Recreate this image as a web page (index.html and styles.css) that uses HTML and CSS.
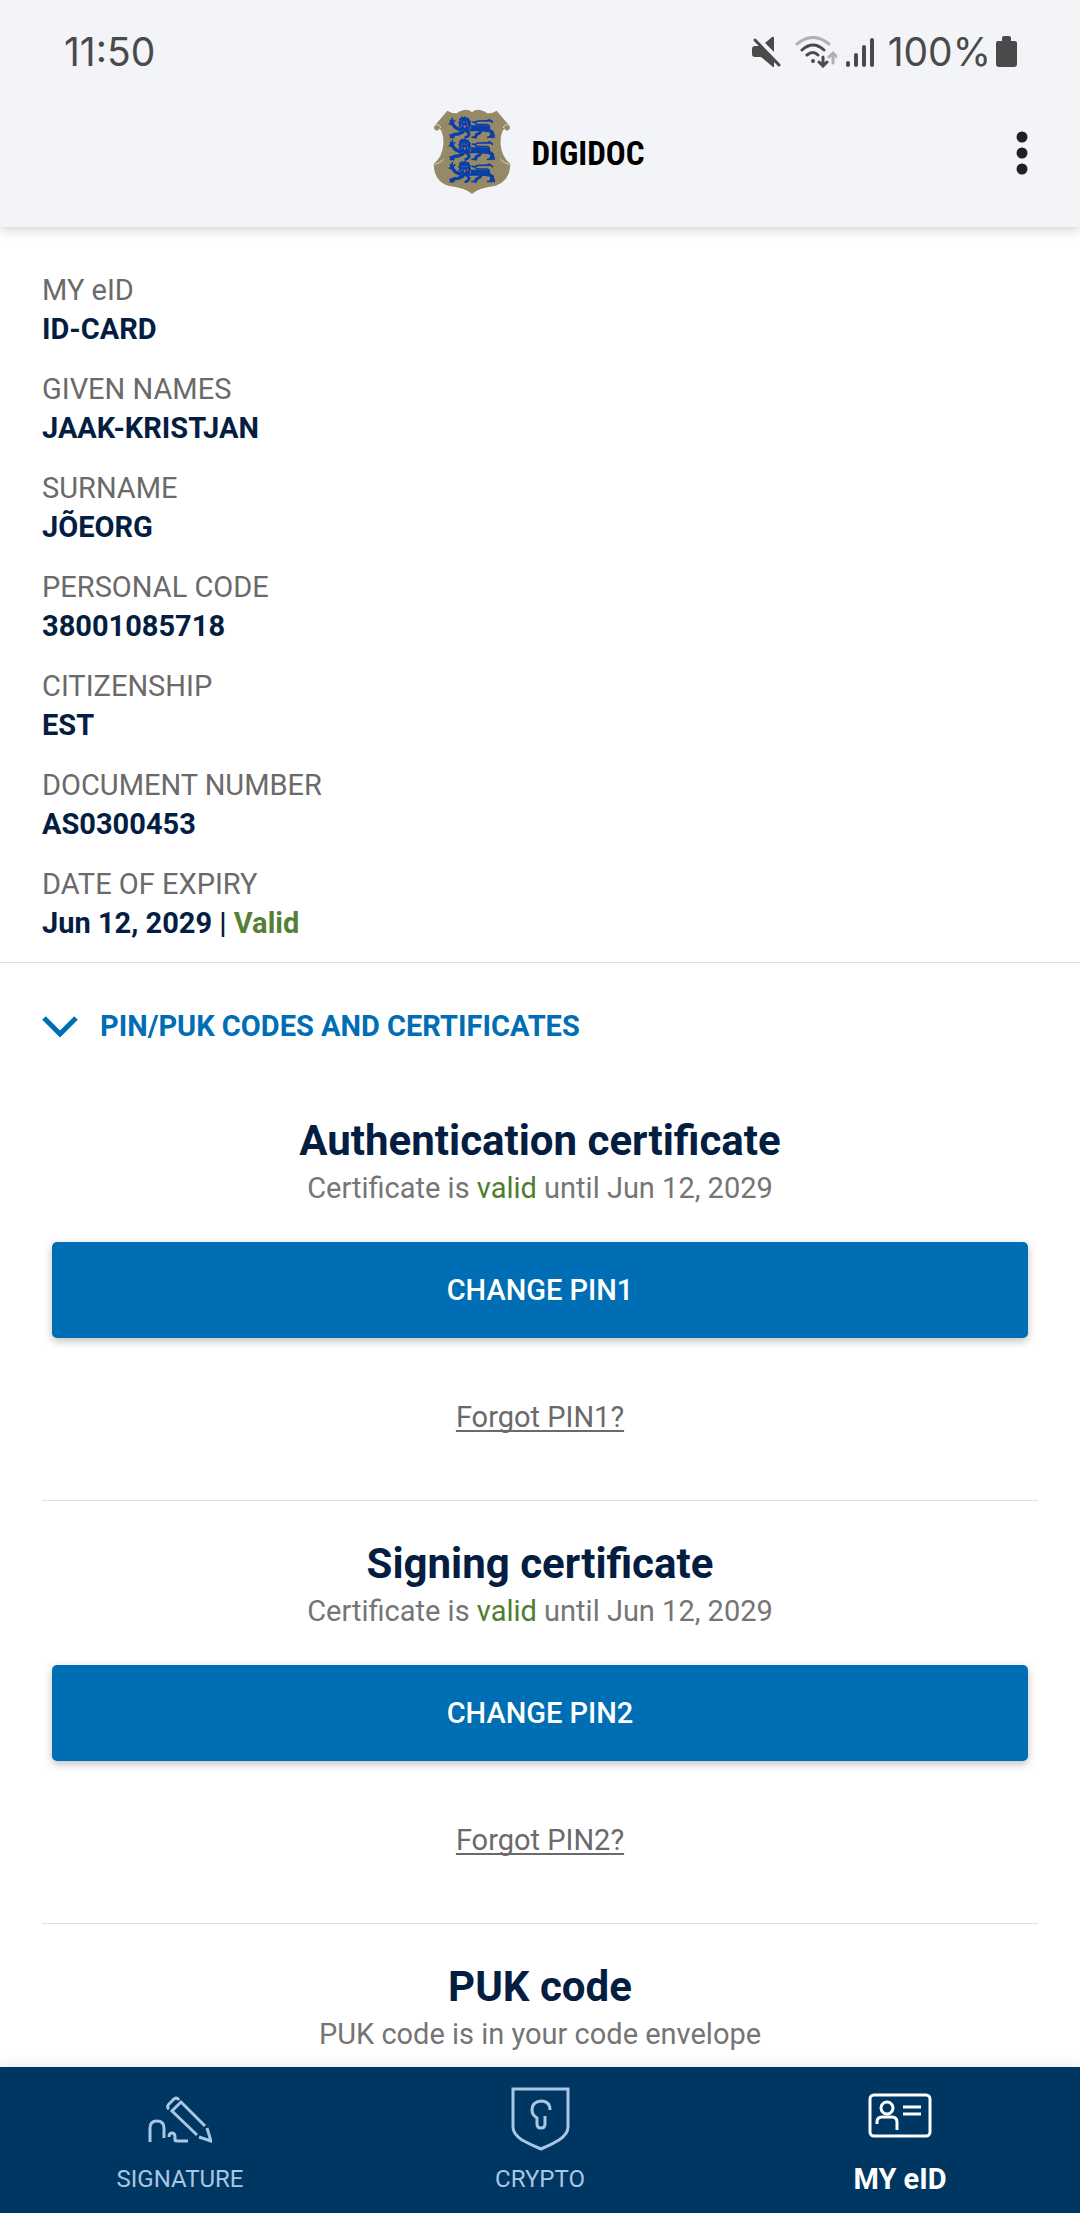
FILE: index.html
```html
<!DOCTYPE html>
<html lang="en">
<head>
  <meta charset="UTF-8">
  <meta name="viewport" content="width=device-width, initial-scale=1.0">
  <title>DigiDoc</title>
  <link rel="stylesheet" href="styles.css">
</head>
<body>

  <header>
    <div class="status-bar">
      <span>11:50</span>
      <div class="status-icons">
        <!-- Muted -->
        <svg width="30" height="32" viewBox="0 0 30 32" fill="#4a4a4a">
          <path d="M0 13q0-3 3-3h6l13 12v9h-1L9 21H3q-3 0-3-3zM13 7l7-6q2-1 2 1v14z"/>
          <path d="M5 1l24 25" stroke="#f3f4f7" stroke-width="3"/>
          <path d="M3 4l24 25" stroke="#4a4a4a" stroke-width="3" stroke-linecap="round"/>
        </svg>
        <!-- Wifi -->
        <svg class="wifi" width="42" height="32" viewBox="0 0 42 32" fill="none" stroke="#4a4a4a" stroke-width="3" stroke-linecap="round">
          <path d="M2 8q16-13 32 0" stroke="#b0b1b3"/>
          <path d="M7 14q11-10 22 0M12 19q6-5 11 0M28 21v8M24 26l4 4 4-4"/>
          <path d="M38 27v-9M34 21l4-4 4 4" stroke="#b0b1b3"/>
          <circle cx="18" cy="25" r="2" fill="#4a4a4a" stroke="none"/>
        </svg>
        <!-- Signal -->
        <svg class="signal" width="30" height="32" viewBox="0 0 30 32" stroke="#4a4a4a" stroke-width="4" stroke-linecap="round">
          <path d="M4 27v2M12 19v10M20 11v18M28 4v25"/>
        </svg>
        <span>100%</span>
        <svg class="battery" width="21" height="31" viewBox="0 0 21 31" fill="#4a4a4a">
          <path d="M6 5V2q0-2 2-2h5q2 0 2 2v3h4q2 0 2 2v21q0 3-3 3H3q-3 0-3-3V7q0-2 2-2z"/>
        </svg>
      </div>
    </div>

    <div class="title-bar">
      <div class="brand">
        <svg width="82" height="90" viewBox="0 0 246 270">
          <defs>
            <g id="lion">
              <g fill="none" stroke="#0a3ea8" stroke-linecap="round" stroke-linejoin="round">
                <!-- raised and lower front legs -->
                <path d="M88 66L72 58 62 44" stroke-width="10"/>
                <path d="M62 44l-4-7M63 44l1-13M64 44l7-6M59 48l-4-1" stroke-width="5"/>
                <path d="M96 72L82 78 70 79 62 86" stroke-width="10"/>
                <path d="M66 80l-9 1M64 84l-6 4M68 84v5" stroke-width="5"/>
                <!-- body and hind legs -->
                <path d="M104 62l20-1 30 0 14 2" stroke-width="18"/>
                <path d="M162 64l13 3 9 7-3 11" stroke-width="11"/>
                <path d="M180 86l-10 2M184 84l6 4M184 78l6 4" stroke-width="5"/>
                <path d="M152 66l-6 9-10 5-2 6" stroke-width="9"/>
                <path d="M134 86l-11 2M136 86l-3 4" stroke-width="5"/>
                <path d="M108 70l7 8-4 7-7 3" stroke-width="8"/>
                <!-- tail -->
                <path d="M174 62q4-9-6-12l-20 0q-14 0-15-5t10-6l32-1q8 0 9 5M133 44l-9-2M166 39l10-4" stroke-width="5"/>
              </g>
              <!-- mane and face -->
              <path d="M84 32l5-2 3-5 5 3 6-4 3 5 8 0 1 6 5 5-2 6 3 6-5 5-1 7-7 2-5 5-6-4-8-1-1-7-6-4 3-6-4-5 4-5z" fill="#0a3ea8"/>
              <path d="M90 41l5 3M104 44l5-3M93 49l-3 8M109 49l1 8M99 39v5M119 54l-2 12" stroke="#968a66" stroke-width="2" fill="none"/>
              <path d="M98 52h6v6q-3 4-6 0z" fill="#d4526a"/>
            </g>
          </defs>
          <path d="M123 12Q135 3 147 6q14 2 22 10 14 1 28-8l32 38q8 6 8 12 0 11-12 9-5-1-4-7-14 17-12 50 3 36 29 58-1 52-44 65-55 7-71 25-16-18-71-25-43-13-44-65 26-22 29-58 2-33-12-50 1 6-4 7-12 2-12-9 0-6 8-12L49 8q14 9 28 8 8-8 22-10 12-3 24 6z" fill="#968a66"/>
          <path d="M12 52q14-6 17 8M234 52q-14-6-17 8M38 154q-12 12-28 16M208 154q12 12 28 16" fill="none" stroke="#f3f4f7" stroke-width="2"/>
          <use href="#lion"/>
          <use href="#lion" y="66"/>
          <use href="#lion" y="133"/>
        </svg>
        <h1>DIGIDOC</h1>
      </div>
      <button class="menu-btn" aria-label="Menu">
        <svg width="12" height="44" viewBox="0 0 12 44" fill="#212121">
          <circle cx="6" cy="6" r="5.5"/>
          <circle cx="6" cy="22" r="5.5"/>
          <circle cx="6" cy="38" r="5.5"/>
        </svg>
      </button>
    </div>
  </header>

  <main>
    <dl class="person">
      <div><dt>MY eID</dt><dd>ID-CARD</dd></div>
      <div><dt>GIVEN NAMES</dt><dd>JAAK-KRISTJAN</dd></div>
      <div><dt>SURNAME</dt><dd>JÕEORG</dd></div>
      <div><dt>PERSONAL CODE</dt><dd>38001085718</dd></div>
      <div><dt>CITIZENSHIP</dt><dd>EST</dd></div>
      <div><dt>DOCUMENT NUMBER</dt><dd>AS0300453</dd></div>
      <div><dt>DATE OF EXPIRY</dt><dd>Jun 12, 2029 | <span class="valid">Valid</span></dd></div>
    </dl>

    <button class="codes-toggle" aria-expanded="true">
      <svg width="36" height="22" viewBox="0 0 36 22" fill="none" stroke="#006eb5" stroke-width="5">
        <path d="M2 2l16 16L34 2"/>
      </svg>
      PIN/PUK CODES AND CERTIFICATES
    </button>

    <section class="certificate">
      <h2>Authentication certificate</h2>
      <p>Certificate is <span class="valid">valid</span> until Jun 12, 2029</p>
      <button class="change-btn">CHANGE PIN1</button>
      <a href="#">Forgot PIN1?</a>
    </section>

    <section class="certificate">
      <h2>Signing certificate</h2>
      <p>Certificate is <span class="valid">valid</span> until Jun 12, 2029</p>
      <button class="change-btn">CHANGE PIN2</button>
      <a href="#">Forgot PIN2?</a>
    </section>

    <section class="certificate">
      <h2>PUK code</h2>
      <p>PUK code is in your code envelope</p>
    </section>
  </main>

  <nav>
    <a href="#">
      <svg width="64" height="64" viewBox="0 0 64 64" fill="none" stroke="#a9c6e3" stroke-width="3">
        <path d="M2 55V41q0-7 7-7t7 7v10M21 50q0-4 3-4t3 4v3q0 1 2 1h11"/>
        <path d="M31 13q-2-3-5-1l-5 5q-3 3 0 5M57 39L33 15l-9 9 25 24M51 50l12 4-4-13"/>
      </svg>
      SIGNATURE
    </a>
    <a href="#">
      <svg width="64" height="64" viewBox="0 0 64 64" fill="none" stroke="#a9c6e3" stroke-width="3">
        <path d="M5 2h55v38q0 7-9 13-8 5-18 9-10-4-19-9-9-6-9-13z"/>
        <path d="M42 23q0-9-9-9-9 1-9 9 0 5 5 8v6q0 4 4 4t4-4v-8"/>
      </svg>
      CRYPTO
    </a>
    <a href="#" class="active">
      <svg width="64" height="64" viewBox="0 0 64 64" fill="none" stroke="#fff" stroke-width="3">
        <rect x="2" y="8" width="60" height="41" rx="4"/>
        <circle cx="19" cy="21" r="6"/>
        <path d="M9 37v-2q0-5 5-5h10q5 0 5 5v8M35 20h18M35 27h18"/>
      </svg>
      MY eID
    </a>
  </nav>

</body>
</html>
```

FILE: styles.css
```css
* {
  box-sizing: border-box;
  margin: 0;
  padding: 0;
}

body {
  font-family: Roboto, sans-serif;
  font-size: 29px;
  line-height: 39px;
  height: 100vh;
  display: flex;
  flex-direction: column;
  background-color: #ffffff;
  color: #6a6a6a;
}

button {
  font: inherit;
  border: none;
  background: none;
  cursor: pointer;
}

header {
  background-color: #f3f4f7;
  box-shadow: 0 2px 12px rgba(0, 0, 0, 0.2);
  z-index: 1;
}

.status-bar {
  display: flex;
  justify-content: space-between;
  align-items: center;
  padding: 32px 63px 0 64px;
  font-family: Inter, sans-serif;
  font-size: 39px;
  color: #4a4a4a;
}

.status-icons {
  display: flex;
  align-items: center;
}

.wifi {
  margin-left: 13px;
}

.signal {
  margin: 0 14px 0 7px;
}

.battery {
  margin-left: 5px;
}

.title-bar {
  display: grid;
  grid-template-columns: 1fr auto 1fr;
  align-items: center;
  padding: 37px 48px 29px;
}

.brand {
  grid-column: 2;
  display: flex;
  align-items: center;
  gap: 18px;
  padding-right: 4px;
}

.brand h1 {
  font-family: "Roboto Condensed", "Liberation Sans Narrow", Roboto, sans-serif;
  font-size: 33px;
  color: #000000;
}

.menu-btn {
  display: flex;
  justify-self: end;
  padding: 4px;
}

main {
  flex: 1;
  min-height: 0;
  overflow: hidden;
}

.person {
  display: flex;
  flex-direction: column;
  gap: 21px;
  padding: 44px 42px 19px;
  border-bottom: 1px solid #dcdddf;
}

.person dd {
  font-weight: bold;
  color: #041e42;
}

.valid,
.person .valid {
  color: #567f35;
}

.codes-toggle {
  display: flex;
  align-items: center;
  gap: 22px;
  padding: 44px 42px 32px;
  font-weight: bold;
  color: #006eb5;
}

.certificate {
  display: flex;
  flex-direction: column;
  align-items: center;
  margin: 0 42px;
  padding: 39px 10px 63px;
  border-bottom: 1px solid #e0e0e0;
}

.certificate:last-child {
  border-bottom: none;
}

.certificate h2 {
  margin-bottom: 4px;
  font-size: 42px;
  line-height: 48px;
  color: #041e42;
}

.certificate p {
  color: #757575;
}

.certificate .valid {
  color: #4f7d2c;
}

.change-btn {
  width: 100%;
  height: 96px;
  margin: 34px 0 60px;
  border-radius: 5px;
  background-color: #006eb5;
  box-shadow: 0 3px 8px rgba(0, 0, 0, 0.25);
  font-weight: 500;
  color: #ffffff;
}

.certificate a {
  color: inherit;
  text-underline-offset: 3px;
  text-decoration-skip-ink: none;
}

nav {
  display: grid;
  grid-template-columns: repeat(3, 1fr);
  background-color: #003662;
  box-shadow: 0 0 16px rgba(0, 0, 0, 0.1);
}

nav a {
  display: flex;
  flex-direction: column;
  align-items: center;
  gap: 8px;
  padding: 20px 0 14px;
  font-size: 24px;
  line-height: 40px;
  color: #a9c6e3;
  text-decoration: none;
}

nav .active {
  font-size: 29px;
  font-weight: bold;
  color: #ffffff;
}
```
